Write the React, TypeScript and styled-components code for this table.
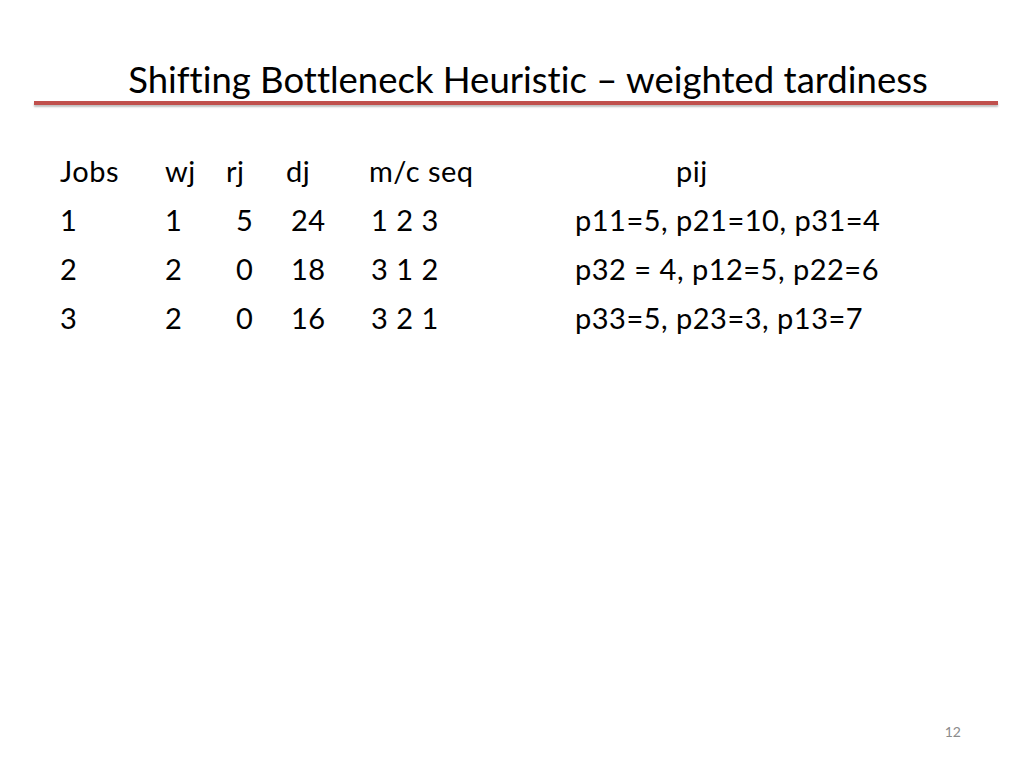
import React from "react";
import styled, { createGlobalStyle } from "styled-components";

const GlobalStyle = createGlobalStyle`
  html, body {
    margin: 0;
    padding: 0;
    background: #ffffff;
  }
  body {
    font-family: Lato, "Open Sans", "Liberation Sans", sans-serif;
    font-variant-ligatures: none;
    color: #000000;
  }
`;

// whole slide, 4:3 at 1024 wide
const Slide = styled.div`
  width: 1024px;
  height: 768px;
  display: flex;
  flex-direction: column;
  background: #ffffff;
  overflow: hidden;
`;

const Header = styled.header`
  display: flex;
  flex-direction: column;
  padding: 61px 26px 0 34px;
`;

const Title = styled.h1`
  margin: 0;
  font-size: 36.5px;
  font-weight: 400;
  line-height: 1;
  text-align: center;
  padding-left: 24px;
  white-space: nowrap;
`;

// red accent line under the title
const Rule = styled.div`
  margin-top: 3px;
  width: 964px;
  height: 4px;
  background: #c0504d;
  box-shadow: 0 2px 2px rgba(0, 0, 0, 0.25);
`;

const Table = styled.div`
  display: grid;
  grid-template-columns: 105px 61px 60px 83px 206px 1fr;
  margin: 41px 0 0 60px;
  font-size: 29px;
  letter-spacing: 0.5px;
  line-height: 49px;
`;

const Cell = styled.div<{ $indent?: number }>`
  padding-left: ${(p) => p.$indent ?? 0}px;
  white-space: nowrap;
`;

const Footer = styled.footer`
  margin-top: auto;
  display: flex;
  justify-content: flex-end;
  padding: 0 63px 28px 0;
`;

const PageNum = styled.span`
  font-size: 14px;
  color: #8b8b8b;
`;

type Row = { job: string; w: string; r: string; d: string; seq: string; p: string };

const rows: Row[] = [
  { job: "1", w: "1", r: "5", d: "24", seq: "1 2 3", p: "p11=5, p21=10, p31=4" },
  { job: "2", w: "2", r: "0", d: "18", seq: "3 1 2", p: "p32 = 4, p12=5, p22=6" },
  { job: "3", w: "2", r: "0", d: "16", seq: "3 2 1", p: "p33=5, p23=3, p13=7" },
];

export default function App() {
  return (
    <>
      <GlobalStyle />
      <Slide>
        <Header>
          <Title>Shifting Bottleneck Heuristic – weighted tardiness</Title>
          <Rule />
        </Header>
        <Table>
          <Cell>Jobs</Cell>
          <Cell>wj</Cell>
          <Cell>rj</Cell>
          <Cell>dj</Cell>
          <Cell>m/c seq</Cell>
          <Cell $indent={101}>pij</Cell>
          {rows.map((r) => (
            <React.Fragment key={r.job}>
              <Cell>{r.job}</Cell>
              <Cell>{r.w}</Cell>
              <Cell $indent={10}>{r.r}</Cell>
              <Cell $indent={5}>{r.d}</Cell>
              <Cell $indent={2}>{r.seq}</Cell>
              <Cell>{r.p}</Cell>
            </React.Fragment>
          ))}
        </Table>
        <Footer>
          <PageNum>12</PageNum>
        </Footer>
      </Slide>
    </>
  );
}
